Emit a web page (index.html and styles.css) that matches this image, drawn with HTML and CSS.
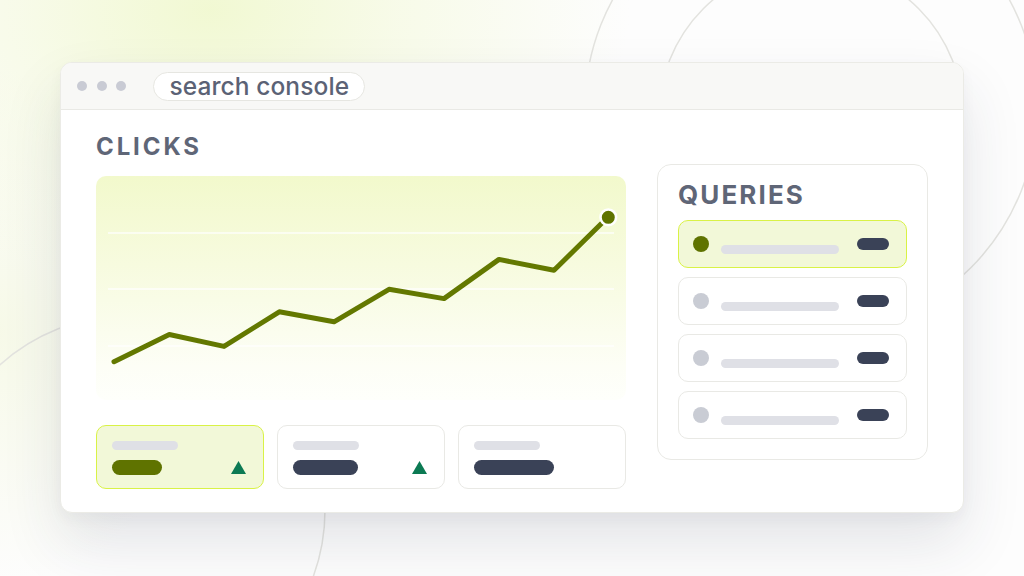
FILE: index.html
```html
<!DOCTYPE html>
<html lang="en">
<head>
<meta charset="utf-8">
<title>search console</title>
<link rel="stylesheet" href="styles.css">
</head>
<body>
<div class="stage">
  <svg class="rings" width="1024" height="576" viewBox="0 0 1024 576" aria-hidden="true">
    <circle cx="811" cy="108" r="226"/>
    <circle cx="811" cy="116" r="152"/>
    <circle cx="130" cy="510" r="195"/>
  </svg>
  <div class="window">
    <div class="titlebar">
      <div class="dots"><span class="dot"></span><span class="dot"></span><span class="dot"></span></div>
      <div class="address">search console</div>
    </div>
    <div class="content">
      <div class="main">
        <h2 class="heading">CLICKS</h2>
        <div class="chart">
          <svg width="530" height="224" viewBox="0 0 530 224">
            <line class="grid" x1="12" y1="57" x2="518" y2="57"/>
            <line class="grid" x1="12" y1="113" x2="518" y2="113"/>
            <line class="grid" x1="12" y1="170" x2="518" y2="170"/>
            <polyline class="trend" points="18,185.7 73.3,158.5 128,170.4 183.3,135.8 238,145.8 293,113.3 348,122.6 403,83.4 458,94.3 508,45"/>
            <circle class="end" cx="512.3" cy="41.3" r="7.8"/>
          </svg>
        </div>
        <div class="stats">
          <div class="stat active">
            <span class="label"></span>
            <div class="stat-row"><span class="value v1"></span><svg class="up" width="15" height="13" viewBox="0 0 15 13"><polygon points="7.5,0 15,13 0,13"/></svg></div>
          </div>
          <div class="stat">
            <span class="label"></span>
            <div class="stat-row"><span class="value v2"></span><svg class="up" width="15" height="13" viewBox="0 0 15 13"><polygon points="7.5,0 15,13 0,13"/></svg></div>
          </div>
          <div class="stat">
            <span class="label"></span>
            <div class="stat-row"><span class="value v3"></span></div>
          </div>
        </div>
      </div>
      <div class="queries">
        <h2 class="heading big">QUERIES</h2>
        <div class="rows">
          <div class="row active"><span class="bullet"></span><span class="bar"></span><span class="pill"></span></div>
          <div class="row"><span class="bullet"></span><span class="bar"></span><span class="pill"></span></div>
          <div class="row"><span class="bullet"></span><span class="bar"></span><span class="pill"></span></div>
          <div class="row"><span class="bullet"></span><span class="bar"></span><span class="pill"></span></div>
        </div>
      </div>
    </div>
  </div>
</div>
</body>
</html>
```

FILE: styles.css
```css
* { box-sizing: border-box; }
html, body { margin: 0; padding: 0; }
body {
  width: 1024px;
  height: 576px;
  overflow: hidden;
  font-family: Inter, "Noto Sans", "Liberation Sans", sans-serif;
  background:
    radial-gradient(ellipse 420px 280px at 210px 10px, rgba(240,248,206,0.9) 0%, rgba(243,249,216,0.55) 45%, rgba(255,255,255,0) 100%),
    radial-gradient(ellipse 200px 260px at 0px 330px, rgba(246,249,230,0.9) 0%, rgba(255,255,255,0) 100%),
    #fdfdfd;
}
.stage {
  position: relative;
  width: 1024px;
  height: 576px;
  padding: 62px 0 0 60px;
}
.rings {
  position: absolute;
  left: 0;
  top: 0;
  z-index: 0;
}
.rings circle {
  fill: none;
  stroke: #e3e3df;
  stroke-width: 1.5;
}
.window {
  position: relative;
  z-index: 1;
  width: 904px;
  height: 451px;
  background: #fff;
  border: 1px solid #ebebe6;
  border-radius: 12px;
  box-shadow: 0 30px 60px rgba(40, 50, 70, 0.12), 0 6px 14px rgba(40, 50, 70, 0.04);
  overflow: hidden;
}
.titlebar {
  height: 47px;
  background: #f8f8f6;
  border-bottom: 1px solid #e9e9e5;
  display: flex;
  align-items: center;
  padding-left: 16px;
  gap: 27px;
}
.dots { display: flex; gap: 9.7px; }
.dot {
  width: 10px;
  height: 10px;
  border-radius: 50%;
  background: #c9cbd4;
}
.address {
  height: 29px;
  padding: 0 15px 0 15px;
  border: 1px solid #e6e6e1;
  border-radius: 15px;
  background: #fff;
  color: #5b6275;
  font-size: 24.5px;
  line-height: 27px;
  font-weight: 450;
  letter-spacing: 0.1px;
  margin-top: 1px;
}
.content {
  display: flex;
  gap: 31px;
  padding: 23px 35px 0 35px;
}
.main { width: 530px; }
.heading {
  margin: 0;
  font-size: 24px;
  line-height: 28px;
  font-weight: 700;
  letter-spacing: 2.9px;
  color: #5f6677;
}
.heading.big {
  font-size: 26px;
  line-height: 30px;
  letter-spacing: 2.1px;
}
.chart {
  margin-top: 15px;
  width: 530px;
  height: 224px;
  border-radius: 10px;
  background: linear-gradient(180deg, #f2f9cc 0%, #f7fbdf 40%, #fdfef6 85%, #fefffb 100%);
}
.chart svg { display: block; }
.grid { stroke: rgba(255,255,255,0.85); stroke-width: 1.5; }
.trend {
  fill: none;
  stroke: #637800;
  stroke-width: 5;
  stroke-linecap: round;
  stroke-linejoin: round;
}
.end { fill: #5f7300; stroke: #fff; stroke-width: 2.6; }
.stats {
  margin-top: 25px;
  display: flex;
  gap: 13px;
}
.stat {
  width: 168px;
  height: 64px;
  border: 1px solid #e9e9e5;
  border-radius: 10px;
  padding: 14.5px 17px 0 15px;
  display: flex;
  flex-direction: column;
  gap: 10px;
}
.stat.active {
  background: #f2f8d8;
  border-color: #d9f246;
}
.label {
  display: block;
  width: 66px;
  height: 9px;
  border-radius: 5px;
  background: #dfe0e6;
}
.stat-row {
  display: flex;
  align-items: center;
  justify-content: space-between;
  height: 15px;
}
.value {
  display: block;
  height: 15px;
  border-radius: 8px;
  background: #3a4257;
}
.value.v1 { width: 50px; background: #5f7300; }
.value.v2 { width: 65px; }
.value.v3 { width: 80px; }
.up polygon { fill: #0c7a53; }
.up { display: block; }
.queries {
  width: 271px;
  height: 296px;
  margin-top: 31px;
  border: 1px solid #e9e9e5;
  border-radius: 14px;
  padding: 15px 20px 0 20px;
}
.rows {
  margin-top: 10px;
  display: flex;
  flex-direction: column;
  gap: 9px;
}
.row {
  height: 48px;
  border: 1px solid #e9e9e5;
  border-radius: 10px;
  display: flex;
  align-items: center;
  padding: 0 17px 0 14px;
}
.row.active {
  background: #f2f8d8;
  border-color: #d9f246;
}
.bullet {
  width: 16px;
  height: 16px;
  border-radius: 50%;
  background: #c9ccd4;
  flex: none;
}
.row.active .bullet { background: #5f7300; }
.bar {
  width: 118px;
  height: 9px;
  border-radius: 5px;
  background: #dfe0e6;
  margin-left: 12px;
  margin-top: 10px;
}
.pill {
  width: 32px;
  height: 12px;
  border-radius: 6px;
  background: #3a4257;
  margin-left: auto;
}
```
